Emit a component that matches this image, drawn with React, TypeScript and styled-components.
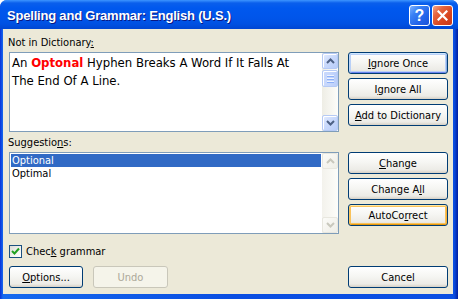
import * as React from "react";
import styled, {createGlobalStyle, css} from "styled-components";

const UI_FONT = `"DejaVu Sans Condensed", "Liberation Sans", sans-serif`;

const GlobalStyle = createGlobalStyle`
  html, body {
    margin: 0;
    padding: 0;
    background: #ffffff;
  }

  body {
    font-family: ${UI_FONT};
    font-size: 11px;
    color: #000000;
  }
`

const Window = styled.div`
  width: 458px;
  height: 299px;
  display: flex;
  flex-direction: column;
  background: linear-gradient(90deg, #0831d9 0, #166aee 3px, #0a4ee2 50%, #0b4fe2 calc(100% - 4px), #001ea0 100%);
  border-radius: 7px 7px 0 0;
  overflow: hidden;
`

const TitleBar = styled.div`
  height: 29px;
  flex: none;
  display: flex;
  align-items: center;
  gap: 2px;
  padding: 2px 5px 0 7px;
  box-sizing: border-box;
  background: linear-gradient(180deg, #3d95ff 0, #0a5fec 3px, #0058ee 8px, #0055ea 18px, #0051e2 24px, #0046d2 29px);
`

const Title = styled.div`
  flex: 1;
  color: #ffffff;
  font-family: "Liberation Sans", sans-serif;
  font-weight: bold;
  font-size: 13px;
  letter-spacing: -0.2px;
  text-shadow: 1px 1px 0 #0a1883;
  white-space: nowrap;
`

const CaptionButton = styled.div<{ $close?: boolean }>`
  width: 21px;
  height: 21px;
  box-sizing: border-box;
  border: 1px solid #ffffff;
  border-radius: 3px;
  display: flex;
  align-items: center;
  justify-content: center;
  color: #ffffff;
  font-family: "Liberation Sans", sans-serif;
  font-weight: bold;
  font-size: 16px;
  background: ${p => p.$close
    ? "linear-gradient(135deg, #f2a58a 0, #e5653f 30%, #d8451f 65%, #c8381a 100%)"
    : "linear-gradient(135deg, #7fb2ff 0, #3a82f5 30%, #2465ea 65%, #1b52d8 100%)"};
`

const Body = styled.div`
  flex: 1;
  margin: 0 5px 5px 3px;
  padding: 0 5px 0 6px;
  background: #ece9d8;
  display: grid;
  grid-template-columns: 330px 100px;
  grid-template-rows: 23px 80px 20px 82px 32px 22px;
  column-gap: 9px;
  grid-template-areas:
    "label1 ."
    "box buttons1"
    "label2 ."
    "list buttons2"
    "check ."
    "bottom cancel";
`

const Label = styled.div<{ $area: string }>`
  grid-area: ${p => p.$area};
  align-self: end;
  line-height: 13px;
  padding: 0 0 3px 0;
  margin-left: -1px;
`

const Key = styled.span`
  text-decoration: underline;
`

const TextBox = styled.div`
  grid-area: box;
  display: flex;
  border: 1px solid #7f9db9;
  background: #ffffff;
`

const BoxText = styled.div`
  flex: 1;
  padding: 1px 2px 0;
  font-size: 13px;
  line-height: 18px;
  color: #000000;
`

const Misspelled = styled.span`
  color: #ff0000;
  font-weight: bold;
`

const ListBox = styled.div`
  grid-area: list;
  display: flex;
  border: 1px solid #7f9db9;
  background: #ffffff;
`

const Items = styled.div`
  flex: 1;
  padding: 1px 1px 0 1px;
`

const Item = styled.div<{ $selected?: boolean }>`
  height: 13px;
  line-height: 13px;
  padding-left: 1px;
  white-space: nowrap;
  ${p => p.$selected && css`
    background: #316ac5;
    color: #ffffff;
  `}
`

const ScrollBar = styled.div<{ $disabled?: boolean }>`
  width: 16px;
  display: flex;
  flex-direction: column;
  gap: 1px;
  background: ${p => p.$disabled
    ? "linear-gradient(90deg, #f3f2ec, #fdfdfa)"
    : "linear-gradient(90deg, #eeede5, #fdfdfa)"};
`

const ScrollButton = styled.div<{ $disabled?: boolean }>`
  height: 16px;
  box-sizing: border-box;
  border-radius: 2px;
  display: flex;
  align-items: center;
  justify-content: center;
  ${p => p.$disabled ? css`
    border: 1px solid #e8e7df;
    background: linear-gradient(135deg, #fbfbf8, #efeee7);
  ` : css`
    border: 1px solid #b6caf5;
    background: linear-gradient(135deg, #e4ecfe 0, #cadafc 45%, #b8cdf9 100%);
    box-shadow: inset 1px 1px 0 #ffffff;
  `}
`

const Thumb = styled.div`
  height: 17px;
  box-sizing: border-box;
  border: 1px solid #b6caf5;
  border-radius: 2px;
  background: linear-gradient(90deg, #cad9fc 0, #c5d6fc 50%, #bacefa 100%);
  box-shadow: inset 1px 1px 0 #ffffff;
  display: flex;
  flex-direction: column;
  align-items: center;
  justify-content: center;
  gap: 1px;
`

const Grip = styled.div`
  width: 7px;
  height: 1px;
  background: #eef3fe;
  border-bottom: 1px solid #8cb0f8;
`

const Track = styled.div`
  flex: 1;
`

const ButtonStack = styled.div<{ $area: string }>`
  grid-area: ${p => p.$area};
  display: flex;
  flex-direction: column;
  gap: 4px;
`

const Button = styled.button<{ $width?: number; $state?: "focus" | "hot" }>`
  width: ${p => p.$width ?? 100}px;
  height: 22px;
  padding: 0;
  box-sizing: border-box;
  border: 1px solid #003c74;
  border-radius: 3px;
  font-family: ${UI_FONT};
  font-size: 11px;
  color: #000000;
  background: linear-gradient(180deg, #ffffff 0, #f6f6f3 45%, #ecebe6 85%, #d6d0c5 100%);
  ${p => p.$state === "focus" && css`
    box-shadow: inset 0 1px 0 #cee7ff, inset 1px 0 0 #bcd4f6, inset -1px 0 0 #89ade4, inset 0 -1px 0 #6982ee,
      inset 0 0 0 2px #b9d0f7;
  `}
  ${p => p.$state === "hot" && css`
    box-shadow: inset 0 1px 0 #ffe7a2, inset 1px 0 0 #fbc761, inset -1px 0 0 #f6b13a, inset 0 -1px 0 #e5970d,
      inset 0 0 0 2px #f9c25a;
  `}
  &:disabled {
    color: #aca899;
    border-color: #c9c7ba;
    background: #f5f4ea;
  }
`

const CheckRow = styled.label`
  grid-area: check;
  display: flex;
  align-items: center;
  gap: 4px;
  padding-top: 11px;
  align-self: start;
  line-height: 13px;
`

const CheckBox = styled.span`
  width: 13px;
  height: 13px;
  box-sizing: border-box;
  border: 1px solid #1c5180;
  background: linear-gradient(135deg, #dcdcd7 0, #f4f4f0 60%, #ffffff 100%);
  display: flex;
  align-items: center;
  justify-content: center;
`

const BottomLeft = styled.div`
  grid-area: bottom;
  display: flex;
  gap: 10px;
`

const CancelSlot = styled.div`
  grid-area: cancel;
`

const Arrow = ({up, disabled}: { up?: boolean; disabled?: boolean }) => (
  <svg width="9" height="6" viewBox="0 0 9 6">
    <polyline
      points={up ? "1,5 4.5,1.5 8,5" : "1,1 4.5,4.5 8,1"}
      fill="none"
      stroke={disabled ? "#c9c8bd" : "#4d6185"}
      strokeWidth="2"
    />
  </svg>
);

const Bar = ({disabled}: { disabled?: boolean }) => (
  <ScrollBar $disabled={disabled}>
    <ScrollButton $disabled={disabled}><Arrow up disabled={disabled}/></ScrollButton>
    {disabled ? null : (
      <Thumb><Grip/><Grip/><Grip/></Thumb>
    )}
    <Track/>
    <ScrollButton $disabled={disabled}><Arrow disabled={disabled}/></ScrollButton>
  </ScrollBar>
);

const App = () => (
  <>
    <GlobalStyle/>
    <Window>
      <TitleBar>
        <Title>Spelling and Grammar: English (U.S.)</Title>
        <CaptionButton>?</CaptionButton>
        <CaptionButton $close>
          <svg width="11" height="11" viewBox="0 0 11 11">
            <path d="M1.5 1.5 L9.5 9.5 M9.5 1.5 L1.5 9.5" stroke="#ffffff" strokeWidth="2.2" strokeLinecap="square"/>
          </svg>
        </CaptionButton>
      </TitleBar>
      <Body>
        <Label $area="label1">Not in Dictionary<Key>:</Key></Label>
        <TextBox>
          <BoxText>
            An <Misspelled>Optonal</Misspelled> Hyphen Breaks A Word If It Falls At<br/>
            The End Of A Line.
          </BoxText>
          <Bar/>
        </TextBox>
        <ButtonStack $area="buttons1">
          <Button $state="focus"><Key>I</Key>gnore Once</Button>
          <Button>I<Key>g</Key>nore All</Button>
          <Button><Key>A</Key>dd to Dictionary</Button>
        </ButtonStack>
        <Label $area="label2">Suggestio<Key>n</Key>s:</Label>
        <ListBox>
          <Items>
            <Item $selected>Optional</Item>
            <Item>Optimal</Item>
          </Items>
          <Bar disabled/>
        </ListBox>
        <ButtonStack $area="buttons2">
          <Button><Key>C</Key>hange</Button>
          <Button>Change A<Key>l</Key>l</Button>
          <Button $state="hot">AutoCo<Key>r</Key>rect</Button>
        </ButtonStack>
        <CheckRow>
          <CheckBox>
            <svg width="9" height="9" viewBox="0 0 9 9">
              <polyline points="1,4 3.5,6.5 8,1.5" fill="none" stroke="#21a121" strokeWidth="2"/>
            </svg>
          </CheckBox>
          <span>Chec<Key>k</Key> grammar</span>
        </CheckRow>
        <BottomLeft>
          <Button $width={74}><Key>O</Key>ptions...</Button>
          <Button $width={75} disabled>Undo</Button>
        </BottomLeft>
        <CancelSlot>
          <Button>Cancel</Button>
        </CancelSlot>
      </Body>
    </Window>
  </>
);

export default App;
